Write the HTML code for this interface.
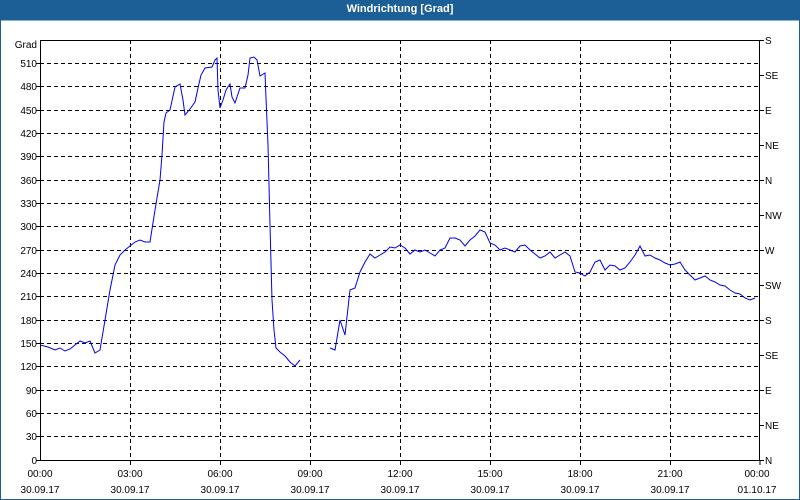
<!DOCTYPE html>
<html><head><meta charset="utf-8"><style>
body{margin:0;width:800px;height:500px;overflow:hidden;background:#fff;font-family:"Liberation Sans",sans-serif;}
.t{position:absolute;left:0;top:0;width:800px;height:20px;background:#1c5f96;color:#fff;font-size:11px;font-weight:bold;text-align:center;line-height:19px;}
</style></head><body>
<div class="t">Windrichtung [Grad]</div>
<svg width="800" height="500" style="position:absolute;left:0;top:0" font-family="Liberation Sans, sans-serif" font-size="10">
<rect x="0.5" y="20" width="799" height="479.5" fill="none" stroke="#1c5f96"/>
<g stroke="#000" stroke-dasharray="4,3" stroke-width="1">
<line x1="40" x2="760" y1="63.5" y2="63.5"/><line x1="40" x2="760" y1="86.5" y2="86.5"/><line x1="40" x2="760" y1="110.5" y2="110.5"/><line x1="40" x2="760" y1="133.5" y2="133.5"/><line x1="40" x2="760" y1="156.5" y2="156.5"/><line x1="40" x2="760" y1="180.5" y2="180.5"/><line x1="40" x2="760" y1="203.5" y2="203.5"/><line x1="40" x2="760" y1="226.5" y2="226.5"/><line x1="40" x2="760" y1="250.5" y2="250.5"/><line x1="40" x2="760" y1="273.5" y2="273.5"/><line x1="40" x2="760" y1="296.5" y2="296.5"/><line x1="40" x2="760" y1="320.5" y2="320.5"/><line x1="40" x2="760" y1="343.5" y2="343.5"/><line x1="40" x2="760" y1="366.5" y2="366.5"/><line x1="40" x2="760" y1="390.5" y2="390.5"/><line x1="40" x2="760" y1="413.5" y2="413.5"/><line x1="40" x2="760" y1="436.5" y2="436.5"/>
<line x1="130.5" x2="130.5" y1="40" y2="460"/><line x1="220.5" x2="220.5" y1="40" y2="460"/><line x1="310.5" x2="310.5" y1="40" y2="460"/><line x1="400.5" x2="400.5" y1="40" y2="460"/><line x1="490.5" x2="490.5" y1="40" y2="460"/><line x1="580.5" x2="580.5" y1="40" y2="460"/><line x1="670.5" x2="670.5" y1="40" y2="460"/>
</g>
<rect x="40.5" y="40.5" width="719" height="420" fill="none" stroke="#000"/>
<g stroke="#000"><path d="M130.5 460v5M220.5 460v5M310.5 460v5M400.5 460v5M490.5 460v5M580.5 460v5M670.5 460v5M760 460v5M36 63.5h4M36 86.5h4M36 110.5h4M36 133.5h4M36 156.5h4M36 180.5h4M36 203.5h4M36 226.5h4M36 250.5h4M36 273.5h4M36 296.5h4M36 320.5h4M36 343.5h4M36 366.5h4M36 390.5h4M36 413.5h4M36 436.5h4M36 460.5h4M760 40.5h4M760 75.5h4M760 110.5h4M760 145.5h4M760 180.5h4M760 215.5h4M760 250.5h4M760 285.5h4M760 320.5h4M760 355.5h4M760 390.5h4M760 425.5h4M760 460.5h4"/></g>
<g text-anchor="end">
<text x="37" y="48">Grad</text><text x="37" y="67">510</text><text x="37" y="90">480</text><text x="37" y="114">450</text><text x="37" y="137">420</text><text x="37" y="160">390</text><text x="37" y="184">360</text><text x="37" y="207">330</text><text x="37" y="230">300</text><text x="37" y="254">270</text><text x="37" y="277">240</text><text x="37" y="300">210</text><text x="37" y="324">180</text><text x="37" y="347">150</text><text x="37" y="370">120</text><text x="37" y="394">90</text><text x="37" y="417">60</text><text x="37" y="440">30</text><text x="37" y="464">0</text>
</g>
<g>
<text x="765" y="44">S</text><text x="765" y="79">SE</text><text x="765" y="114">E</text><text x="765" y="149">NE</text><text x="765" y="184">N</text><text x="765" y="219">NW</text><text x="765" y="254">W</text><text x="765" y="289">SW</text><text x="765" y="324">S</text><text x="765" y="359">SE</text><text x="765" y="394">E</text><text x="765" y="429">NE</text><text x="765" y="464">N</text>
</g>
<g text-anchor="middle">
<text x="40" y="477">00:00</text><text x="40" y="493">30.09.17</text>
<text x="130" y="477">03:00</text><text x="130" y="493">30.09.17</text>
<text x="220" y="477">06:00</text><text x="220" y="493">30.09.17</text>
<text x="310" y="477">09:00</text><text x="310" y="493">30.09.17</text>
<text x="400" y="477">12:00</text><text x="400" y="493">30.09.17</text>
<text x="490" y="477">15:00</text><text x="490" y="493">30.09.17</text>
<text x="580" y="477">18:00</text><text x="580" y="493">30.09.17</text>
<text x="670" y="477">21:00</text><text x="670" y="493">30.09.17</text>
<text x="757" y="477">00:00</text><text x="757" y="493">01.10.17</text>
</g>
<g fill="none" stroke="#0000ee" stroke-width="1">
<polyline points="40,345 48,347 55,350 60,348 65,351 70,349 75,345 80,341 85,343 90,341 95,353 100,350 105,320 110,290 115,265 120,255 125,250 130,246 135,242 140,240 145,242 150,242 155,210 160,180 162,155 164,122 166,113 170,110 175,87 180,84 183,100 185,115 190,109 195,102 198,88 201,75 205,68 212,67 215,60 217,58 218,90 220,108 223,100 226,90 230,84 232,97 235,103 240,88 245,88 248,75 250,58 254,57 257,60 260,76 265,73 266,98 268,145 270,225 272,300 274,330 276,348 280,352 285,356 290,362 295,366 300,360"/>
<polyline points="330,348 335,350 340,320 345,335 350,290 355,288 360,272 365,262 370,254 375,258 380,255 385,252 390,247 395,248 400,245 405,248 410,254 415,250 420,252 425,250 430,253 435,256 440,250 445,248 450,238 455,238 460,240 465,246 470,240 475,236 480,230 485,232 490,243 495,245 500,250 505,248 510,250 515,252 520,246 525,245 530,250 535,254 540,258 545,256 550,252 555,258 560,255 565,252 570,256 575,272 580,273 585,276 590,272 595,262 600,260 605,270 610,265 615,266 620,270 625,268 630,262 635,255 640,246 645,256 650,255 655,258 660,260 665,263 670,265 675,264 680,262 685,270 690,275 695,280 700,278 705,276 710,280 715,282 720,285 725,286 730,290 735,293 740,294 745,298 750,300 755,298"/>
</g>
</svg>
</body></html>
